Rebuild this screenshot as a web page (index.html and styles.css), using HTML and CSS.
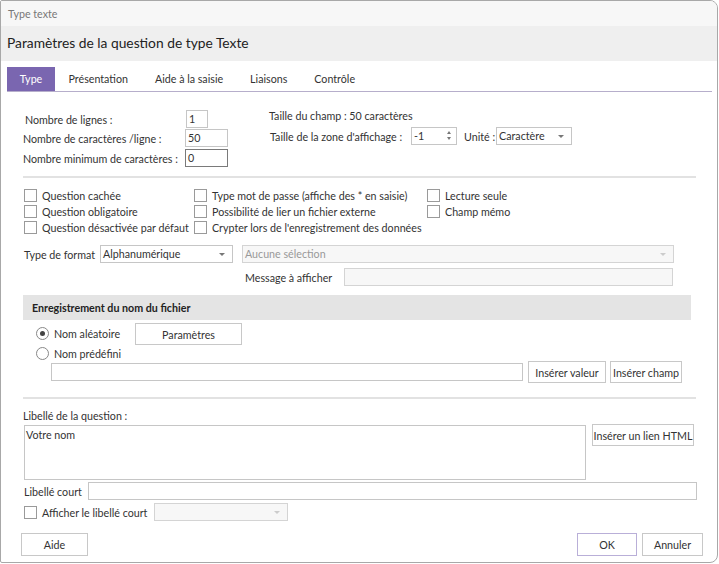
FILE: index.html
```html
<!DOCTYPE html>
<html lang="fr">
<head>
    <meta charset="UTF-8">
    <title>Type texte</title>
    <link rel="stylesheet" href="styles.css">
</head>
<body>
<div class="dialog">
    <div class="titlebar">Type texte</div>
    <div class="header">Paramètres de la question de type Texte</div>

    <div class="tabs">
        <div class="tab active">Type</div>
        <div class="tab">Présentation</div>
        <div class="tab">Aide à la saisie</div>
        <div class="tab">Liaisons</div>
        <div class="tab">Contrôle</div>
    </div>

    <div class="content">
        <div class="sizes">
            <div class="sizes-left">
                <div class="row r1"><span class="lbl">Nombre de lignes :</span><div class="field tiny">1</div></div>
                <div class="row r2"><span class="lbl">Nombre de caractères /ligne :</span><div class="field num">50</div></div>
                <div class="row r3"><span class="lbl">Nombre minimum de caractères :</span><div class="field num focus">0</div></div>
            </div>
            <div class="sizes-right">
                <div class="line">Taille du champ : 50 caractères</div>
                <div class="row spin-row">
                    <span class="lbl">Taille de la zone d'affichage :</span>
                    <div class="field spin">-1<span class="arrows"><span class="up"></span><span class="down"></span></span></div>
                    <span class="lbl unit">Unité :</span>
                    <div class="field select unit-select">Caractère<span class="caret"></span></div>
                </div>
            </div>
        </div>

        <div class="sep"></div>

        <div class="checks">
            <label class="check"><span class="box"></span>Question cachée</label>
            <label class="check"><span class="box"></span>Type mot de passe (affiche des * en saisie)</label>
            <label class="check"><span class="box"></span>Lecture seule</label>
            <label class="check"><span class="box"></span>Question obligatoire</label>
            <label class="check"><span class="box"></span>Possibilité de lier un fichier externe</label>
            <label class="check"><span class="box"></span>Champ mémo</label>
            <label class="check"><span class="box"></span>Question désactivée par défaut</label>
            <label class="check"><span class="box"></span>Crypter lors de l'enregistrement des données</label>
        </div>

        <div class="row format-row">
            <span class="lbl">Type de format</span>
            <div class="field select format-select">Alphanumérique<span class="caret"></span></div>
            <div class="field select disabled none-select">Aucune sélection<span class="caret"></span></div>
        </div>
        <div class="row message-row">
            <span class="lbl">Message à afficher</span>
            <div class="field disabled message"></div>
        </div>

        <div class="section">
            <div class="section-title">Enregistrement du nom du fichier</div>
            <div class="row radio-row first">
                <label class="radio"><span class="circle checked"></span>Nom aléatoire</label>
                <button class="btn params">Paramètres</button>
            </div>
            <div class="row radio-row second">
                <label class="radio"><span class="circle"></span>Nom prédéfini</label>
            </div>
            <div class="row insert-row">
                <div class="field filename"></div>
                <button class="btn ins-value">Insérer valeur</button>
                <button class="btn ins-field">Insérer champ</button>
            </div>
        </div>

        <div class="sep sep2"></div>

        <div class="line q-label">Libellé de la question :</div>
        <div class="question-row">
            <div class="field textarea">Votre nom</div>
            <button class="btn html-link">Insérer un lien HTML</button>
        </div>
        <div class="row short-row">
            <span class="lbl">Libellé court</span>
            <div class="field short"></div>
        </div>
        <div class="row show-row">
            <label class="check"><span class="box"></span>Afficher le libellé court</label>
            <div class="field select disabled show-select"><span class="caret"></span></div>
        </div>
    </div>

    <div class="footer">
        <button class="btn help">Aide</button>
        <div class="spacer"></div>
        <button class="btn ok">OK</button>
        <button class="btn cancel">Annuler</button>
    </div>
</div>
</body>
</html>
```

FILE: styles.css
```css
body {
    margin: 0;
    font-family: Lato, "Open Sans", sans-serif;
    font-size: 10.7px;
    color: #333;
    background: #fff;
    white-space: nowrap;
}
.dialog {
    width: 716px;
    height: 561px;
    border: 1px solid #a8a8a8;
    border-radius: 2px 8px 8px 2px;
    overflow: hidden;
    position: relative;
}
.titlebar {
    height: 25px;
    line-height: 25px;
    padding-left: 7px;
    background: #f7f7f7;
    color: #777;
}
.header {
    height: 35px;
    line-height: 34px;
    padding-left: 6px;
    background: #efefef;
    color: #222;
    font-size: 13.8px;
}
.tabs {
    display: flex;
    margin: 6px 5px 0 6px;
    border-bottom: 1px solid #b6aecb;
}
.tab {
    height: 24px;
    line-height: 24px;
    padding: 0 13.5px;
    color: #333;
}
.tab.active {
    width: 48px;
    padding: 0;
    text-align: center;
    background: #7a66b0;
    color: #fff;
}
.content {
    padding: 18px 0 0 22px;
}
.row {
    display: flex;
    align-items: center;
}
.line {
    height: 16px;
    line-height: 16px;
}
.field {
    height: 18px;
    box-sizing: border-box;
    border: 1px solid #c6c6c6;
    background: #fff;
    line-height: 16px;
    padding-left: 2px;
    position: relative;
}
.field.focus {
    border-color: #7a7a7a;
}
.field.disabled {
    background: #f7f7f7;
    border-color: #d4d4d4;
    color: #999;
}
.caret {
    position: absolute;
    right: 7px;
    top: 7px;
    border-left: 3px solid transparent;
    border-right: 3px solid transparent;
    border-top: 3px solid #777;
}
.disabled .caret {
    border-top-color: #ccc;
}

/* tailles */
.sizes {
    display: flex;
}
.sizes-left {
    width: 246px;
}
.sizes-left .lbl {
    width: 162px;
}
.sizes-left .r1 .lbl {
    padding-left: 2px;
    width: 161px;
}
.sizes-left .r2 {
    margin-top: 1px;
}
.sizes-left .r3 {
    margin-top: 2px;
}
.field.tiny {
    width: 22px;
}
.field.num {
    width: 43px;
}
.sizes-right .line {
    margin-top: -2px;
}
.spin-row {
    margin-top: 3px;
}
.spin-row .lbl {
    padding-left: 1px;
    width: 141px;
}
.field.spin {
    width: 46px;
}
.arrows {
    position: absolute;
    right: 5px;
    top: 3px;
    display: flex;
    flex-direction: column;
    gap: 3px;
}
.arrows .up {
    border-left: 2.5px solid transparent;
    border-right: 2.5px solid transparent;
    border-bottom: 3px solid #777;
}
.arrows .down {
    border-left: 2.5px solid transparent;
    border-right: 2.5px solid transparent;
    border-top: 3px solid #777;
}
.spin-row .unit {
    width: auto;
    margin: 0 1px 0 6px;
}
.unit-select {
    width: 76px;
}

.sep {
    height: 2px;
    background: #e2e2e2;
    margin: 9px 21px 0 0;
}

/* cases a cocher */
.checks {
    display: grid;
    grid-template-columns: 170px 233px auto;
    grid-auto-rows: 16px;
    margin-top: 9px;
}
.check {
    display: flex;
    align-items: center;
    height: 16px;
    padding-left: 1px;
}
.box {
    width: 13px;
    height: 13px;
    box-sizing: border-box;
    border: 1px solid #9a9a9a;
    background: #fff;
    margin-right: 5px;
    flex: none;
}
.format-row {
    margin-top: 10px;
}
.format-row .lbl {
    width: 76px;
    padding-left: 1px;
}
.format-select {
    width: 133px;
}
.none-select {
    width: 432px;
    margin-left: 9px;
}
.message-row {
    margin-top: 5px;
}
.message-row .lbl {
    margin-left: 222px;
    width: 99px;
}
.message {
    width: 329px;
}

/* section fichier */
.section {
    margin-top: 9px;
}
.section-title {
    width: 659px;
    height: 25px;
    line-height: 25px;
    padding-left: 9px;
    background: #e4e4e4;
    font-weight: bold;
    color: #222;
}
.radio {
    display: flex;
    align-items: center;
    padding-left: 13px;
}
.circle {
    width: 13px;
    height: 13px;
    box-sizing: border-box;
    border: 1px solid #888;
    border-radius: 50%;
    margin-right: 5px;
    position: relative;
}
.circle.checked::after {
    content: "";
    position: absolute;
    left: 3px;
    top: 3px;
    width: 5px;
    height: 5px;
    border-radius: 50%;
    background: #444;
}
.radio-row.first {
    margin-top: 3px;
    height: 22px;
}
.radio-row.first .radio {
    width: 99px;
    margin-top: -2px;
}
.radio-row.second {
    height: 16px;
}
.btn {
    font-family: inherit;
    font-size: inherit;
    color: #333;
    background: #fff;
    border: 1px solid #c8c8c8;
    box-sizing: border-box;
    padding: 0;
    height: 22px;
    white-space: nowrap;
}
.params {
    width: 107px;
}
.insert-row {
    height: 22px;
}
.filename {
    width: 472px;
    margin-left: 28px;
}
.ins-value {
    width: 78px;
    margin-left: 5px;
}
.ins-field {
    width: 72px;
    margin-left: 4px;
}
.sep2 {
    margin-top: 14px;
}

/* libelle */
.q-label {
    margin-top: 9px;
}
.question-row {
    display: flex;
    align-items: flex-start;
}
.field.textarea {
    width: 562px;
    height: 55px;
    margin-top: 1px;
    margin-left: 1px;
    padding: 1px 0 0 1px;
}
.html-link {
    width: 102px;
    margin-left: 6px;
}
.short-row {
    margin-top: 2px;
}
.short-row .lbl {
    width: 64px;
    padding-left: 1px;
}
.short {
    width: 609px;
}
.show-row {
    margin-top: 3px;
}
.show-row .check {
    width: 130px;
}
.show-select {
    width: 134px;
}

.footer {
    display: flex;
    padding: 12px 14px 0 20px;
}
.spacer {
    flex: 1;
}
.footer .btn {
    height: 23px;
}
.help {
    width: 67px;
}
.ok {
    width: 60px;
    border-color: #b9afd8;
}
.cancel {
    width: 61px;
    margin-left: 5px;
}
```
